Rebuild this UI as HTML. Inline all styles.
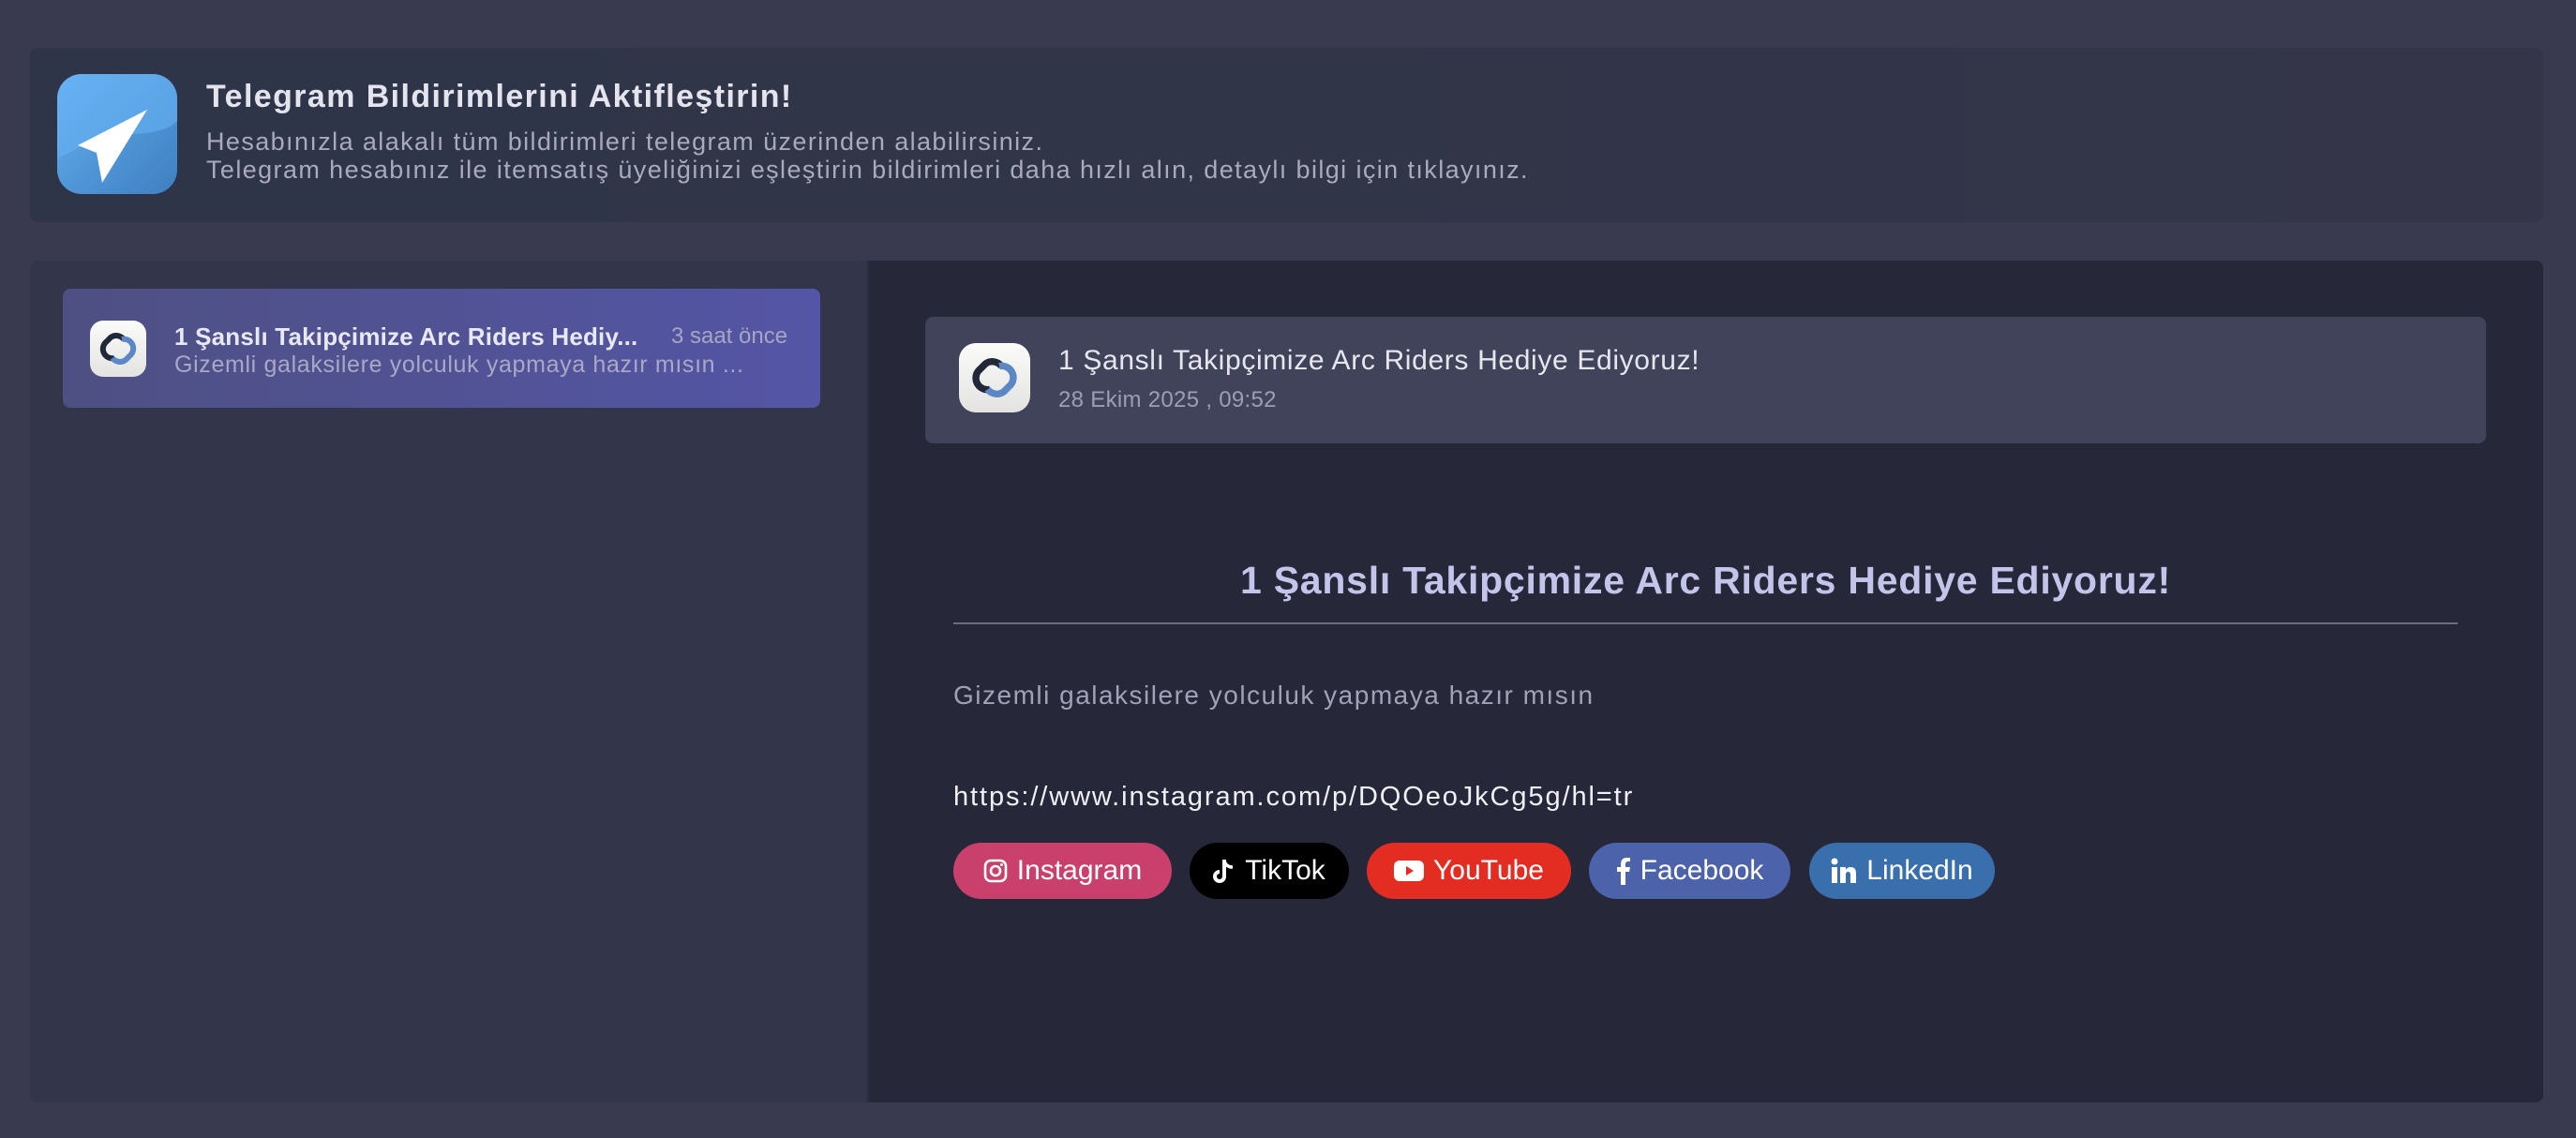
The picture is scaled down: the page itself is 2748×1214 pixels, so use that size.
<!DOCTYPE html>
<html><head><meta charset="utf-8"><style>
*{margin:0;padding:0;box-sizing:border-box}
body{width:2748px;height:1214px;background:#393a4f;font-family:"Liberation Sans",sans-serif;position:relative;overflow:hidden}
.abs{position:absolute}
.banner{left:32px;top:51px;width:2681px;height:186px;background:linear-gradient(90deg,#2e3548,#343549);border-radius:8px}
.tg{left:61px;top:79px;width:128px;height:128px;border-radius:26px;background:linear-gradient(135deg,#69b4f5,#4f95d6 55%,#3f7fc0);overflow:hidden}
.t1{left:220px;top:84px;font-size:34px;color:#e4e4ef;font-weight:bold;white-space:nowrap;letter-spacing:1.4px}
.t2{left:220px;top:136px;font-size:27px;color:#a9aabb;line-height:30px;white-space:nowrap;letter-spacing:1.4px}
.left{left:32px;top:278px;width:893px;height:898px;background:#33354a;border-radius:8px 0 0 8px}
.right{left:925px;top:278px;width:1788px;height:898px;background:#262739;border-radius:0 8px 8px 0;border-left:2px solid #2c2d40}
.item{left:67px;top:308px;width:808px;height:127px;border-radius:8px;background:linear-gradient(90deg,#4e5083,#5455a6)}
.ico{background:linear-gradient(180deg,#fbfbfa,#e3e4e1);border-radius:14px;overflow:hidden}
.it1{left:186px;top:344px;font-size:26px;font-weight:bold;color:#e8e8f2;white-space:nowrap;letter-spacing:0.2px}
.it2{left:186px;top:375px;font-size:25px;color:#a9a9c6;white-space:nowrap;letter-spacing:0.65px}
.it3{left:716px;top:345px;font-size:24px;color:#a6a6c2;white-space:nowrap}
.card{left:987px;top:338px;width:1665px;height:135px;border-radius:8px;background:#41435a}
.c1{left:1129px;top:368px;font-size:30px;color:#e6e6ee;white-space:nowrap;letter-spacing:0.65px}
.c2{left:1129px;top:413px;font-size:24px;color:#9d9eb3;white-space:nowrap;letter-spacing:0.3px}
.h{left:1017px;width:1605px;top:596px;text-align:center;font-size:41px;font-weight:bold;color:#c4c3e9;letter-spacing:0.75px}
.hr{left:1017px;top:664px;width:1605px;height:2px;background:#6c6d80}
.p{left:1017px;top:726px;font-size:28px;color:#a2a2b6;white-space:nowrap;letter-spacing:1.5px}
.u{left:1017px;top:834px;font-size:29px;color:#f0f0f5;white-space:nowrap;letter-spacing:1.9px}
.b{top:899px;height:60px;border-radius:30px;color:#fff;font-size:30px;display:flex;align-items:center;justify-content:center;gap:10px;white-space:nowrap}
</style></head><body>
<div class="abs banner"></div>
<div class="abs tg">
<svg width="128" height="128" viewBox="0 0 128 128"><path d="M0 0 H128 V50 C110 70 60 60 40 70 L0 90Z" fill="#66b1f3" opacity=".6"/><path d="M96 38 L22 76 L42 84 L48 116 Z" fill="#fff"/></svg>
</div>
<div class="abs t1">Telegram Bildirimlerini Aktifleştirin!</div>
<div class="abs t2">Hesabınızla alakalı tüm bildirimleri telegram üzerinden alabilirsiniz.<br>Telegram hesabınız ile itemsatış üyeliğinizi eşleştirin bildirimleri daha hızlı alın, detaylı bilgi için tıklayınız.</div>
<div class="abs left"></div>
<div class="abs right"></div>
<div class="abs item"></div>
<div class="abs ico" style="left:96px;top:342px;width:60px;height:60px">
<svg width="60" height="60" viewBox="0 0 60 60"><path d="M36 20 A10 10 0 0 0 22 18 L16 24 A10 10 0 0 0 26 40" stroke="#222838" stroke-width="6" fill="none"/><path d="M24 40 A10 10 0 0 0 38 42 L44 36 A10 10 0 0 0 34 20" stroke="#5b87c4" stroke-width="6" fill="none"/></svg></div>
<div class="abs it1">1 Şanslı Takipçimize Arc Riders Hediy...</div>
<div class="abs it2">Gizemli galaksilere yolculuk yapmaya hazır mısın ...</div>
<div class="abs it3">3 saat önce</div>
<div class="abs card"></div>
<div class="abs ico" style="left:1023px;top:366px;width:76px;height:74px;border-radius:18px">
<svg width="76" height="74" viewBox="0 0 60 60"><path d="M36 20 A10 10 0 0 0 22 18 L16 24 A10 10 0 0 0 26 40" stroke="#222838" stroke-width="6" fill="none"/><path d="M24 40 A10 10 0 0 0 38 42 L44 36 A10 10 0 0 0 34 20" stroke="#5b87c4" stroke-width="6" fill="none"/></svg></div>
<div class="abs c1">1 Şanslı Takipçimize Arc Riders Hediye Ediyoruz!</div>
<div class="abs c2">28 Ekim 2025 , 09:52</div>
<div class="abs h">1 Şanslı Takipçimize Arc Riders Hediye Ediyoruz!</div>
<div class="abs hr"></div>
<div class="abs p">Gizemli galaksilere yolculuk yapmaya hazır mısın</div>
<div class="abs u">https://www.instagram.com/p/DQOeoJkCg5g/hl=tr</div>
<div class="abs b" style="left:1017px;width:233px;background:#c9406d"><svg width="26" height="26" viewBox="0 0 26 26"><rect x="2" y="2" width="22" height="22" rx="6" stroke="#fff" stroke-width="2.6" fill="none"/><circle cx="13" cy="13" r="5" stroke="#fff" stroke-width="2.6" fill="none"/><circle cx="19.5" cy="6.5" r="1.5" fill="#fff"/></svg>Instagram</div>
<div class="abs b" style="left:1269px;width:170px;background:#000"><svg width="24" height="28" viewBox="0 0 24 28"><path d="M12 2 V20 A5 5 0 1 1 7 15" stroke="#fff" stroke-width="4" fill="none"/><path d="M12 3 C13 8 17 10 21 10" stroke="#fff" stroke-width="3.5" fill="none"/></svg>TikTok</div>
<div class="abs b" style="left:1458px;width:218px;background:#e32d22"><svg width="32" height="24" viewBox="0 0 32 24"><rect x="0" y="1" width="32" height="22" rx="6" fill="#fff"/><path d="M13 7 L21 12 L13 17Z" fill="#e32d22"/></svg>YouTube</div>
<div class="abs b" style="left:1695px;width:215px;background:#4c63ac"><svg width="16" height="30" viewBox="0 0 16 30"><path d="M10 30 V16 H14 L15 11 H10 V8 C10 6 11 5 13 5 H15 V1 H11 C7 1 5 4 5 8 V11 H1 V16 H5 V30Z" fill="#fff"/></svg>Facebook</div>
<div class="abs b" style="left:1930px;width:198px;background:#3a6fae"><svg width="28" height="28" viewBox="0 0 28 28"><rect x="1" y="10" width="6" height="17" fill="#fff"/><circle cx="4" cy="4" r="3.5" fill="#fff"/><path d="M10 10 H16 V13 C17 11 19 10 21 10 C25 10 27 12 27 17 V27 H21 V18 C21 16 20 15 18.5 15 C17 15 16 16 16 18 V27 H10Z" fill="#fff"/></svg>LinkedIn</div>
</body></html>
